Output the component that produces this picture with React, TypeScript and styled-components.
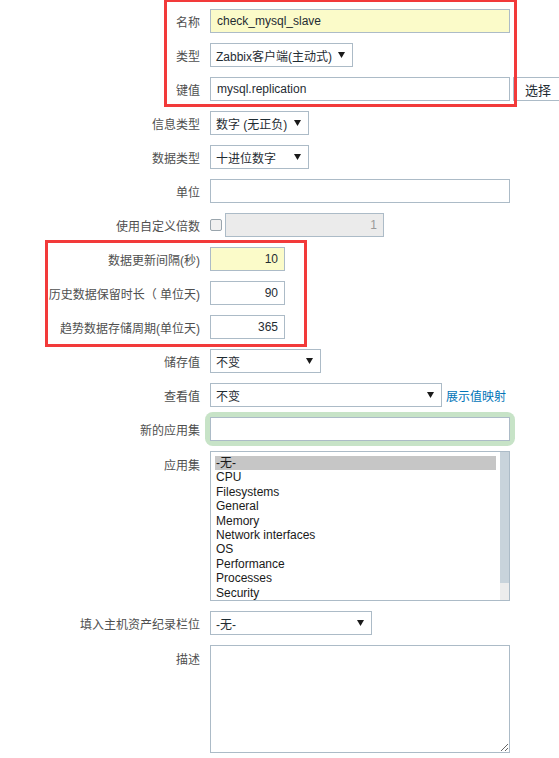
import React from "react";
import styled, { createGlobalStyle } from "styled-components";

const GlobalStyle = createGlobalStyle`
  html, body {
    margin: 0;
    padding: 0;
    background: #fff;
    overflow: hidden;
  }
  body {
    font-family: "Liberation Sans", Arial, "Noto Sans CJK SC", sans-serif;
    font-size: 12px;
    color: #1f2c33;
  }
`;

const Page = styled.div`
  position: relative;
  width: 559px;
  height: 758px;
  padding-top: 9px;
  box-sizing: border-box;
`;

const Form = styled.div`
  display: flex;
  flex-direction: column;
  gap: 10px;
`;

const Row = styled.div<{ $top?: boolean }>`
  display: grid;
  grid-template-columns: 200px auto;
  column-gap: 10px;
  align-items: ${(p) => (p.$top ? "start" : "center")};
`;

const Label = styled.div<{ $pad?: number }>`
  text-align: right;
  color: #4f4f4f;
  white-space: nowrap;
  padding-top: ${(p) => p.$pad ?? 0}px;
`;

const Field = styled.div`
  display: flex;
  align-items: center;
`;

const TextBox = styled.div<{ $w: number; $yellow?: boolean; $right?: boolean; $disabled?: boolean }>`
  box-sizing: border-box;
  width: ${(p) => p.$w}px;
  height: 24px;
  border: 1px solid #acbbc7;
  background: ${(p) => (p.$yellow ? "#fbfbc9" : p.$disabled ? "#ebebeb" : "#fff")};
  color: ${(p) => (p.$disabled ? "#9a9a9a" : "#1f2c33")};
  display: flex;
  align-items: center;
  justify-content: ${(p) => (p.$right ? "flex-end" : "flex-start")};
  padding: 0 6px;
  white-space: nowrap;
  overflow: hidden;
`;

const Select = styled.div<{ $w: number }>`
  box-sizing: border-box;
  width: ${(p) => p.$w}px;
  height: 24px;
  border: 1px solid #acbbc7;
  background: #fff;
  display: flex;
  align-items: center;
  justify-content: space-between;
  padding: 0 7px 0 5px;
  white-space: nowrap;
  color: #1f2c33;
`;

const Arrow = () => (
  <svg width="7" height="6" viewBox="0 0 7 6">
    <path d="M0 0 H7 L3.5 6 Z" fill="#1a1a1a" />
  </svg>
);

const Button = styled.div`
  box-sizing: border-box;
  margin-left: 3px;
  height: 24px;
  width: 56px;
  border: 1px solid #acbbc7;
  background: #fff;
  display: flex;
  align-items: center;
  padding-left: 11px;
  font-size: 13px;
  color: #1f2c33;
`;

const Checkbox = styled.span`
  box-sizing: border-box;
  width: 12px;
  height: 12px;
  border: 1px solid #9aa5ad;
  border-radius: 2px;
  background: #f0f0f0;
  margin-right: 3px;
`;

const Link = styled.a`
  margin-left: 4px;
  color: #0275b8;
  text-decoration: none;
  white-space: nowrap;
`;

const FocusRing = styled.div`
  border-radius: 3px;
  box-shadow: 0 0 0 5px #c7e3c7;
`;

const ListBox = styled.div`
  box-sizing: border-box;
  width: 300px;
  height: 150px;
  border: 1px solid #acbbc7;
  display: flex;
  background: #fff;
`;

const Options = styled.div`
  flex: 1;
  padding: 4px 4px 0 4px;
  overflow: hidden;
`;

const Option = styled.div<{ $selected?: boolean }>`
  height: 14.4px;
  line-height: 14.4px;
  padding-left: 1px;
  color: #1a1a1a;
  background: ${(p) => (p.$selected ? "#c6c6c6" : "transparent")};
  white-space: nowrap;
`;

const Scrollbar = styled.div`
  width: 9px;
  display: flex;
  flex-direction: column;
  background: #ececec;
`;

const Thumb = styled.div`
  height: 131px;
  background: #c8d3db;
`;

const TextArea = styled.textarea`
  box-sizing: border-box;
  width: 300px;
  height: 108px;
  border: 1px solid #acbbc7;
  margin: 0;
  padding: 4px;
  font: inherit;
  background: #fff;
`;

const Mark = styled.div<{ $x: number; $y: number; $w: number; $h: number }>`
  position: absolute;
  left: ${(p) => p.$x}px;
  top: ${(p) => p.$y}px;
  width: ${(p) => p.$w}px;
  height: ${(p) => p.$h}px;
  box-sizing: border-box;
  border: 3px solid #f23a3a;
  pointer-events: none;
`;

const apps = [
  "-无-",
  "CPU",
  "Filesystems",
  "General",
  "Memory",
  "Network interfaces",
  "OS",
  "Performance",
  "Processes",
  "Security",
];

export default function App() {
  return (
    <Page>
      <GlobalStyle />
      <Form>
        <Row>
          <Label>名称</Label>
          <Field>
            <TextBox $w={300} $yellow>check_mysql_slave</TextBox>
          </Field>
        </Row>
        <Row>
          <Label>类型</Label>
          <Field>
            <Select $w={143}>
              <span>Zabbix客户端(主动式)</span>
              <Arrow />
            </Select>
          </Field>
        </Row>
        <Row>
          <Label>键值</Label>
          <Field>
            <TextBox $w={300}>mysql.replication</TextBox>
            <Button>选择</Button>
          </Field>
        </Row>
        <Row>
          <Label>信息类型</Label>
          <Field>
            <Select $w={99}>
              <span>数字 (无正负)</span>
              <Arrow />
            </Select>
          </Field>
        </Row>
        <Row>
          <Label>数据类型</Label>
          <Field>
            <Select $w={99}>
              <span>十进位数字</span>
              <Arrow />
            </Select>
          </Field>
        </Row>
        <Row>
          <Label>单位</Label>
          <Field>
            <TextBox $w={300} />
          </Field>
        </Row>
        <Row>
          <Label>使用自定义倍数</Label>
          <Field>
            <Checkbox />
            <TextBox $w={159} $right $disabled>1</TextBox>
          </Field>
        </Row>
        <Row>
          <Label>数据更新间隔(秒)</Label>
          <Field>
            <TextBox $w={75} $right $yellow>10</TextBox>
          </Field>
        </Row>
        <Row>
          <Label>历史数据保留时长（ 单位天)</Label>
          <Field>
            <TextBox $w={75} $right>90</TextBox>
          </Field>
        </Row>
        <Row>
          <Label>趋势数据存储周期(单位天)</Label>
          <Field>
            <TextBox $w={75} $right>365</TextBox>
          </Field>
        </Row>
        <Row>
          <Label>储存值</Label>
          <Field>
            <Select $w={111}>
              <span>不变</span>
              <Arrow />
            </Select>
          </Field>
        </Row>
        <Row>
          <Label>查看值</Label>
          <Field>
            <Select $w={232}>
              <span>不变</span>
              <Arrow />
            </Select>
            <Link href="#">展示值映射</Link>
          </Field>
        </Row>
        <Row>
          <Label>新的应用集</Label>
          <Field>
            <FocusRing>
              <TextBox $w={300} />
            </FocusRing>
          </Field>
        </Row>
        <Row $top>
          <Label $pad={5}>应用集</Label>
          <Field>
            <ListBox>
              <Options>
                {apps.map((a, i) => (
                  <Option key={a} $selected={i === 0}>
                    {a}
                  </Option>
                ))}
              </Options>
              <Scrollbar>
                <Thumb />
              </Scrollbar>
            </ListBox>
          </Field>
        </Row>
        <Row>
          <Label>填入主机资产纪录栏位</Label>
          <Field>
            <Select $w={162}>
              <span>-无-</span>
              <Arrow />
            </Select>
          </Field>
        </Row>
        <Row $top>
          <Label $pad={5}>描述</Label>
          <Field>
            <TextArea />
          </Field>
        </Row>
      </Form>
      <Mark $x={164} $y={-1} $w={353} $h={108} />
      <Mark $x={45} $y={240} $w={262} $h={107} />
    </Page>
  );
}
